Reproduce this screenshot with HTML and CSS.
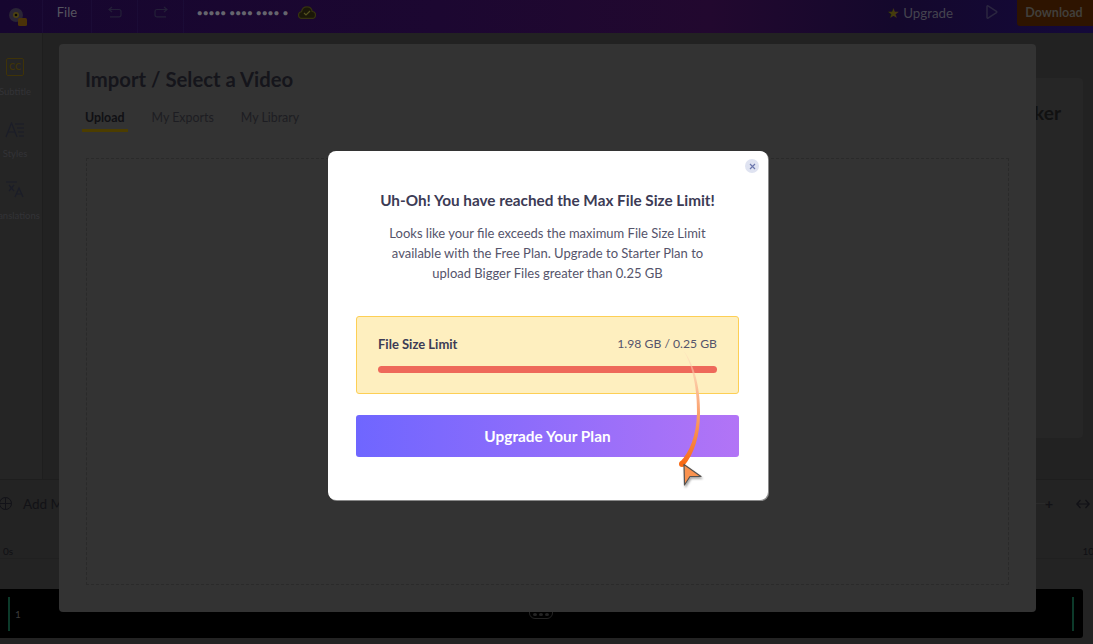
FILE: index.html
```html
<!DOCTYPE html>
<html lang="en">
<head>
  <meta charset="UTF-8" />
  <title>Import / Select a Video</title>
  <link rel="stylesheet" href="styles.css">
</head>
<body>

  <!-- top bar -->
  <header class="topbar">
    <div class="cell cell-logo">
      <svg width="26" height="26" viewBox="0 0 26 26">
        <circle cx="13" cy="11" r="7" fill="#2a2535"/>
        <circle cx="13" cy="11" r="3" fill="#4d4212"/>
        <circle cx="13" cy="11" r="1.3" fill="#0b0b0b"/>
        <rect x="15" y="14" width="9" height="8" rx="1.5" fill="#4a3208"/>
      </svg>
    </div>
    <div class="cell cell-file">File</div>
    <div class="cell cell-icon">
      <svg width="14" height="12" viewBox="0 0 14 12" fill="none" stroke="#242038" stroke-width="1.2">
        <path d="M4 1 1 3.5 4 6M1 3.5h10c1.2 0 2 .8 2 2V9c0 1-.8 1.8-2 1.8H2"/>
      </svg>
    </div>
    <div class="cell cell-icon">
      <svg width="14" height="12" viewBox="0 0 14 12" fill="none" stroke="#242038" stroke-width="1.2">
        <path d="M10 1l3 2.500L10 6M13 3.500H3C1.800 3.500 1 4.300 1 5.500V9c0 1 .8 1.800 2 1.800h9"/>
      </svg>
    </div>
    <div class="project-name">●●●●● ●●●● ●●●● ●</div>
    <svg class="cloud" width="18" height="13" viewBox="0 0 18 13">
      <path d="M4.500 12.500C2 12.500.5 11 .5 9c0-1.800 1.200-3 3-3.300C4 3 6 .8 9 .8c2.800 0 4.800 2 5.200 4.600 2 .3 3.300 1.700 3.300 3.500 0 2-1.500 3.600-3.700 3.600z" fill="#1a1708" stroke="#36330f" stroke-width="1.300"/>
      <path d="M6 7l2 2 4-4" fill="none" stroke="#55521f" stroke-width="1.200"/>
    </svg>
    <div class="spacer"></div>
    <div class="upgrade"><span class="star">★</span>Upgrade</div>
    <svg class="play" width="13" height="14" viewBox="0 0 13 14" fill="none" stroke="#2b2640" stroke-width="1.500">
      <path d="M2 1.500c0-.6.600-.9 1-.6l8.500 5.500c.4.300.4.900 0 1.200L3 13.100c-.4.300-1 0-1-.6z"/>
    </svg>
    <button class="download">Download</button>
  </header>

  <!-- editor behind the dialogs -->
  <div class="work">
    <nav class="sidebar">
      <div class="side-item">
        <div class="cc-icon">CC</div>
        <span>Subtitle</span>
      </div>
      <div class="side-item side-styles">
        <svg width="20" height="16" viewBox="0 0 20 16" fill="none" stroke="#1b1d28" stroke-width="1.200">
          <path d="M1 15 6.500 1 12 15M3 10h7M10 2h9M12 6h7M13 10h6M14 14h5"/>
        </svg>
        <span>Styles</span>
      </div>
      <div class="side-item side-translate">
        <svg width="18" height="17" viewBox="0 0 18 17" fill="none" stroke="#1b1d28" stroke-width="1.200">
          <path d="M0 1h11M3 4l5 6M8 4l-5 6M9 16l4-9 4 9M10.500 13h5"/>
        </svg>
        <span>Translations</span>
      </div>
    </nav>
    <main class="stage">
      <section class="panel">
        <h2 class="panel-title">Subtitle Maker</h2>
      </section>
    </main>
  </div>

  <div class="timeline">
    <div class="tools">
      <svg class="add-icon" width="13" height="13" viewBox="0 0 13 13" fill="none" stroke="#121218">
        <circle cx="6.500" cy="6.500" r="6"/>
        <path d="M6.500 .5v12M.5 6.500h12"/>
      </svg>
      <span class="add-media">Add Media</span>
      <div class="spacer"></div>
      <i class="zoom-line"></i>
      <span class="zoom-plus">+</span>
      <svg class="fit" width="14" height="10" viewBox="0 0 14 10" fill="none" stroke="#111116" stroke-width="1.200">
        <path d="M4.500 1 .8 5l3.700 4M9.500 1l3.700 4-3.700 4M1 5h12"/>
      </svg>
    </div>
    <div class="ruler">
      <span class="tick-start">0s</span>
      <div class="spacer"></div>
      <span class="tick-end">10</span>
    </div>
  </div>

  <div class="track">
    <i class="clip-edge"></i>
    <span class="clip-num">1</span>
    <div class="spacer"></div>
    <i class="clip-edge"></i>
  </div>
  <div class="track-handle"><i></i><i></i><i></i></div>

  <!-- import dialog -->
  <section class="import-modal">
    <h1>Import / Select a Video</h1>
    <div class="tabs">
      <span class="tab active">Upload</span>
      <span class="tab">My Exports</span>
      <span class="tab">My Library</span>
    </div>
    <div class="dropzone"></div>
  </section>

  <!-- limit dialog -->
  <section class="limit-modal">
    <div class="close">
      <svg width="7" height="7" viewBox="0 0 7 7" stroke="#6d78ad" stroke-width="1.200">
        <path d="M1 1l5 5M6 1 1 6"/>
      </svg>
    </div>
    <h3>Uh-Oh! You have reached the Max File Size Limit!</h3>
    <p>Looks like your file exceeds the maximum File Size Limit available with the Free Plan. Upgrade to Starter Plan to upload Bigger Files greater than 0.25 GB</p>
    <div class="limit-box">
      <div class="limit-row">
        <strong>File Size Limit</strong>
        <span>1.98 GB / 0.25 GB</span>
      </div>
      <div class="limit-bar"></div>
    </div>
    <button class="upgrade-btn">Upgrade Your Plan</button>
  </section>

  <!-- arrow and cursor over the dialog -->
  <svg class="pointer" width="50" height="150" viewBox="0 0 50 150">
    <defs>
      <linearGradient id="tail" x1="0" y1="0" x2="0" y2="1">
        <stop offset="0" stop-color="#fbd6bd" stop-opacity="0.3"/>
        <stop offset="0.4" stop-color="#fbb389"/>
        <stop offset="1" stop-color="#f86a15"/>
      </linearGradient>
      <filter id="soft" x="-30%" y="-30%" width="170%" height="170%">
        <feDropShadow dx="1" dy="2" stdDeviation="1.200" flood-opacity="0.35"/>
      </filter>
    </defs>
    <path d="M10 1C20 16 24.500 42 24 64C23.500 86 17 103 7 113L11 117C21 105 27 87 27 64C27.500 42 22 15 10 1Z" fill="url(#tail)"/>
    <circle cx="9" cy="115" r="3" fill="#f86a15"/>
    <path d="M11 115.500 11.500 136 17 127.500 28 127.500Z" fill="#f9924f" stroke="#55514f" stroke-width="1.200" stroke-linejoin="round" filter="url(#soft)"/>
  </svg>

</body>
</html>
```

FILE: styles.css
```css
* {
  box-sizing: border-box;
}
html, body {
  margin: 0;
  height: 644px;
  overflow: hidden;
}
body {
  position: relative;
  font-family: Lato, "Liberation Sans", sans-serif;
  background: #232323;
  color: #1a1a20;
}
.spacer {
  flex: 1;
}

/* top bar */
.topbar {
  height: 33px;
  display: flex;
  align-items: flex-start;
  background: linear-gradient(90deg, #16062f 0%, #1c0731 40%, #22082f 65%, #14082c 82%, #14093a 100%);
}
.cell {
  height: 33px;
  display: flex;
  align-items: center;
  justify-content: center;
  border-right: 1px solid #1b0c36;
}
.cell-logo {
  width: 43px;
  justify-content: flex-start;
  padding-left: 3px;
}
.cell-file {
  width: 49px;
  padding-bottom: 9px;
  font-size: 13px;
  color: #56555f;
}
.cell-icon {
  width: 46px;
  padding-bottom: 9px;
}
.project-name {
  margin: 7px 0 0 13px;
  font-size: 8.500px;
  line-height: 12px;
  letter-spacing: 0.800px;
  color: #66656e;
  white-space: nowrap;
}
.cloud {
  margin: 6px 0 0 9px;
}
.upgrade {
  margin-top: 5px;
  display: flex;
  align-items: center;
  gap: 3px;
  font-size: 13.300px;
  line-height: 16px;
  color: #45444f;
}
.star {
  color: #453c0c;
  font-size: 14px;
}
.play {
  margin: 5px 19px 0 32px;
}
.download {
  width: 76px;
  height: 26px;
  padding: 0 6px 2px 4px;
  border: none;
  border-radius: 0 0 0 3px;
  background: #2e1400;
  color: #413f3b;
  font: bold 12.500px Lato, sans-serif;
}

/* editor */
.work {
  height: 446px;
  display: flex;
}
.sidebar {
  width: 43px;
  padding-top: 25px;
  border-right: 1px solid #1e1e1e;
  background: #252525;
  overflow: hidden;
}
.side-item {
  width: 30px;
  height: 61.500px;
  display: flex;
  flex-direction: column;
  align-items: center;
  gap: 11px;
  font-size: 9.500px;
  line-height: 9px;
  color: #333337;
  white-space: nowrap;
}
.cc-icon {
  flex: none;
  width: 18px;
  height: 18px;
  border: 1px solid #3f3308;
  border-radius: 2px;
  color: #3f3308;
  font-size: 9px;
  font-weight: bold;
  line-height: 16px;
  text-align: center;
}
.side-styles svg {
  margin-top: 2px;
}
.side-translate {
  gap: 13px;
}
.stage {
  flex: 1;
  padding: 45px 10px 41px 0;
  background: #222;
  display: flex;
  justify-content: flex-end;
}
.panel {
  width: 400px;
  background: #262626;
  border-radius: 4px;
  padding: 24px 22px;
}
.panel-title {
  margin: 0;
  font-size: 19px;
  line-height: 22px;
  text-align: right;
  color: #111;
}
.timeline {
  height: 110px;
  background: #232323;
  border-top: 1px solid #1e1e1e;
}
.tools {
  height: 47px;
  padding: 0 3px 0 0;
  display: flex;
  align-items: center;
  color: #121216;
}
.add-icon {
  margin-left: -1px;
}
.add-media {
  margin-left: 11px;
  font-size: 13.500px;
}
.zoom-line {
  width: 16px;
  height: 1px;
  background: #2a2a2a;
}
.zoom-plus {
  font-size: 14px;
  font-weight: bold;
  margin-right: 23px;
}
.ruler {
  height: 32px;
  padding-top: 18px;
  display: flex;
  font-size: 10px;
  line-height: 12px;
  border-bottom: 1px solid #202020;
  color: #101014;
}
.tick-start {
  padding-left: 3px;
}
.tick-end {
  margin-right: -1px;
}
.track {
  width: 1083px;
  height: 49px;
  padding: 8px 9px 7px 8px;
  display: flex;
  gap: 5px;
  background: #000;
  border-radius: 0 3px 3px 0;
}
.clip-edge {
  width: 2px;
  background: #0c3a2a;
}
.clip-num {
  align-self: center;
  font-size: 10px;
  color: #3b3b3b;
}
.track-handle {
  position: absolute;
  left: 529px;
  top: 611px;
  width: 24px;
  height: 8px;
  display: flex;
  justify-content: center;
  gap: 2px;
  border: 1px solid #242424;
  border-radius: 0 0 6px 6px;
}
.track-handle i {
  width: 4px;
  height: 3px;
  margin-top: 1px;
  background: #242424;
  border-radius: 50%;
}

/* import dialog */
.import-modal {
  position: absolute;
  left: 59px;
  top: 44px;
  width: 977px;
  height: 568px;
  padding: 22px 27px 27px 26px;
  display: flex;
  flex-direction: column;
  background: #333;
  border-radius: 4px;
}
.import-modal h1 {
  margin: 0;
  font-size: 20.300px;
  line-height: 26px;
  font-weight: bold;
  color: #15151b;
}
.tabs {
  margin: 18px 0 0 -3px;
  display: flex;
  gap: 21px;
  font-size: 12.400px;
  line-height: 16px;
  color: #1d1d22;
}
.tab {
  padding: 0 3px 3px;
  border-bottom: 3px solid transparent;
}
.tab.active {
  font-weight: bold;
  color: #101014;
  border-bottom-color: #4c3d00;
}
.dropzone {
  flex: 1;
  margin-top: 26px;
  margin-left: 1px;
  border: 1px dashed #2a2a2a;
}

/* limit dialog */
.limit-modal {
  position: absolute;
  left: 328px;
  top: 151px;
  width: 440px;
  height: 349px;
  padding: 39px 29px 0 28px;
  background: #fff;
  border-radius: 8px;
  box-shadow: 1px 1px 0 #8a8a8a;
  text-align: center;
  color: #3c3b55;
}
.close {
  position: absolute;
  right: 9px;
  top: 8px;
  width: 14px;
  height: 14px;
  border-radius: 50%;
  background: #dfe3f1;
  display: flex;
  align-items: center;
  justify-content: center;
}
.limit-modal h3 {
  margin: 0;
  font-size: 15.300px;
  line-height: 20px;
  font-weight: bold;
}
.limit-modal p {
  margin: 13px 0 0;
  padding: 0 18px;
  font-size: 13px;
  line-height: 20px;
  color: #55546b;
}
.limit-box {
  height: 78px;
  margin-top: 33px;
  padding: 18px 21px 0;
  background: #feefbf;
  border: 1px solid #fdcf55;
  border-radius: 3px;
}
.limit-row {
  display: flex;
  justify-content: space-between;
  font-size: 13px;
  line-height: 18px;
}
.limit-row span {
  font-size: 12.200px;
  color: #55546b;
}
.limit-bar {
  height: 7px;
  margin-top: 13px;
  background: #ee695a;
  border-radius: 4px;
}
.upgrade-btn {
  display: block;
  width: 100%;
  height: 42px;
  margin-top: 21px;
  border: none;
  border-radius: 3px;
  background: linear-gradient(90deg, #6f66ff, #b274f6);
  color: #fff;
  font: bold 15.400px Lato, sans-serif;
}
.pointer {
  position: absolute;
  left: 673px;
  top: 349px;
}
```
